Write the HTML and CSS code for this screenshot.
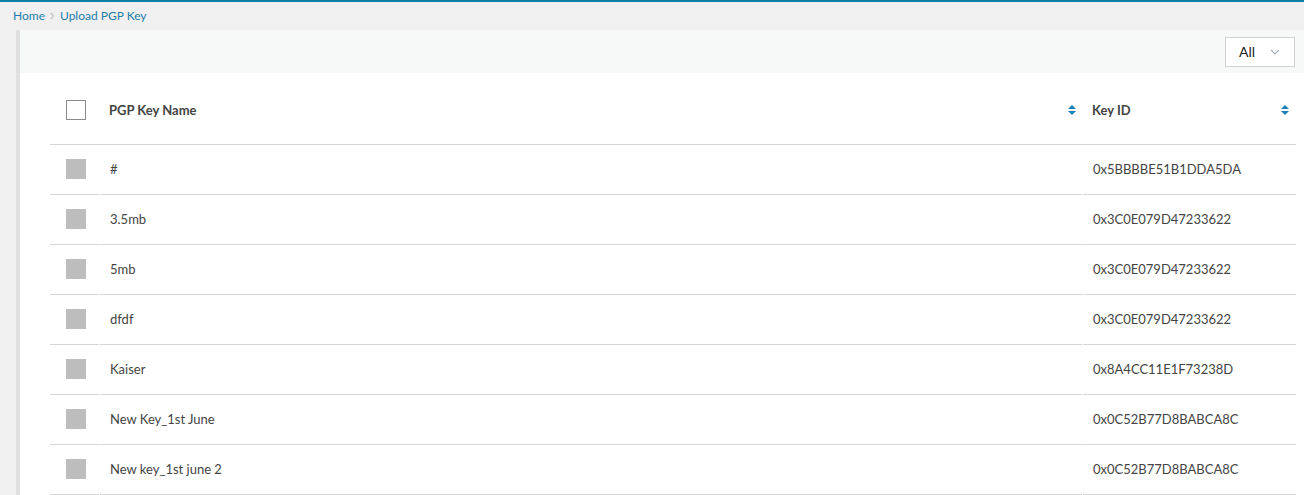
FILE: index.html
```html
<!DOCTYPE html>
<html>
<head>
<meta charset="utf-8">
<link rel="stylesheet" href="styles.css">
</head>
<body>
<div class="topline"></div>
<nav class="crumbs">
  <a class="crumb">Home</a>
  <span class="sep"><svg width="6" height="8" viewBox="0 0 6 8"><path d="M1.5 1 L4.5 4 L1.5 7" fill="none" stroke="#c4c4c4" stroke-width="1.2"/></svg></span>
  <a class="crumb">Upload PGP Key</a>
</nav>
<section class="panel">
  <div class="toolbar">
    <div class="select"><span>All</span><svg width="10" height="6" viewBox="0 0 10 6"><path d="M1 1 L5 5 L9 1" fill="none" stroke="#a9b3bd" stroke-width="1.1"/></svg></div>
  </div>
  <div class="table">
    <div class="thead">
      <div class="c1"><span class="cb-empty"></span></div>
      <div class="c2"><span>PGP Key Name</span><span class="sort"><i class="up"></i><i class="down"></i></span></div>
      <div class="c3"><span>Key ID</span><span class="sort"><i class="up"></i><i class="down"></i></span></div>
    </div>
    <div class="row"><div class="c1"><span class="cb"></span></div><div class="c2">#</div><div class="c3">0x5BBBBE51B1DDA5DA</div></div>
    <div class="row"><div class="c1"><span class="cb"></span></div><div class="c2">3.5mb</div><div class="c3">0x3C0E079D47233622</div></div>
    <div class="row"><div class="c1"><span class="cb"></span></div><div class="c2">5mb</div><div class="c3">0x3C0E079D47233622</div></div>
    <div class="row"><div class="c1"><span class="cb"></span></div><div class="c2">dfdf</div><div class="c3">0x3C0E079D47233622</div></div>
    <div class="row"><div class="c1"><span class="cb"></span></div><div class="c2">Kaiser</div><div class="c3">0x8A4CC11E1F73238D</div></div>
    <div class="row"><div class="c1"><span class="cb"></span></div><div class="c2">New Key_1st June</div><div class="c3">0x0C52B77D8BABCA8C</div></div>
    <div class="row"><div class="c1"><span class="cb"></span></div><div class="c2">New key_1st june 2</div><div class="c3">0x0C52B77D8BABCA8C</div></div>
  </div>
</section>
</body>
</html>
```
FILE: styles.css
```css
html, body {
  margin: 0;
  padding: 0;
  background: #f0f0f0;
  font-family: Lato, "Open Sans", sans-serif;
  color: #444;
  height: 495px;
  overflow: hidden;
}
.topline {
  height: 2px;
  background: #0f7fa7;
}
.crumbs {
  height: 28px;
  display: flex;
  align-items: center;
  padding-left: 13px;
  font-size: 12px;
  box-sizing: border-box;
  padding-bottom: 1px;
}
.crumb {
  color: #1d7eab;
}
.sep {
  display: inline-flex;
  margin: 0 5px 0 4px;
}
.panel {
  margin-left: 16px;
  border-left: 4px solid #e0e0e0;
  background: #fff;
}
.toolbar {
  height: 43px;
  background: #f7f8f8;
  display: flex;
  justify-content: flex-end;
  align-items: center;
  padding-right: 9px;
}
.select {
  height: 28px;
  border: 1px solid #d2d2d2;
  background: #fff;
  display: flex;
  align-items: center;
  justify-content: space-between;
  box-sizing: content-box;
  padding: 0 14px 0 0;
  width: 54px;
  font-size: 14px;
  color: #222;
}
.select span {
  padding-left: 13px;
}
.table {
  padding: 0 8px 0 30px;
}
.thead {
  display: grid;
  grid-template-columns: 49px 982px 1fr;
  height: 71px;
  border-bottom: 1px solid #d6d6d6;
  font-weight: bold;
  font-size: 13px;
  color: #444;
}
.thead > div {
  display: flex;
  align-items: center;
  padding-top: 2px;
}
.thead .c1 {
  justify-content: flex-start;
  padding-left: 16px;
}
.thead .c2 {
  padding-left: 10px;
  justify-content: space-between;
  padding-right: 5px;
}
.thead .c3 {
  padding-left: 11px;
  justify-content: space-between;
  padding-right: 7px;
}
.cb-empty {
  width: 18px;
  height: 18px;
  border: 1px solid #8a8a8a;
  background: #fff;
}
.sort {
  display: flex;
  flex-direction: column;
  align-items: center;
  gap: 2px;
}
.sort i {
  display: block;
  width: 0;
  height: 0;
  border-left: 4px solid transparent;
  border-right: 4px solid transparent;
}
.sort .up {
  border-bottom: 4px solid #1a80b4;
}
.sort .down {
  border-top: 4px solid #1a80b4;
}
.row {
  display: grid;
  grid-template-columns: 49px 982px 1fr;
  column-gap: 1px;
  height: 50px;
  font-size: 13px;
  color: #444;
}
.row > div {
  display: flex;
  align-items: center;
  border-bottom: 1px solid #d6d6d6;
}
.row .c1 {
  padding-left: 16px;
  padding-bottom: 2px;
}
.row .c2,
.row .c3 {
  padding-left: 10px;
  padding-bottom: 2px;
}
.cb {
  width: 20px;
  height: 20px;
  background: #bdbdbd;
}
```
